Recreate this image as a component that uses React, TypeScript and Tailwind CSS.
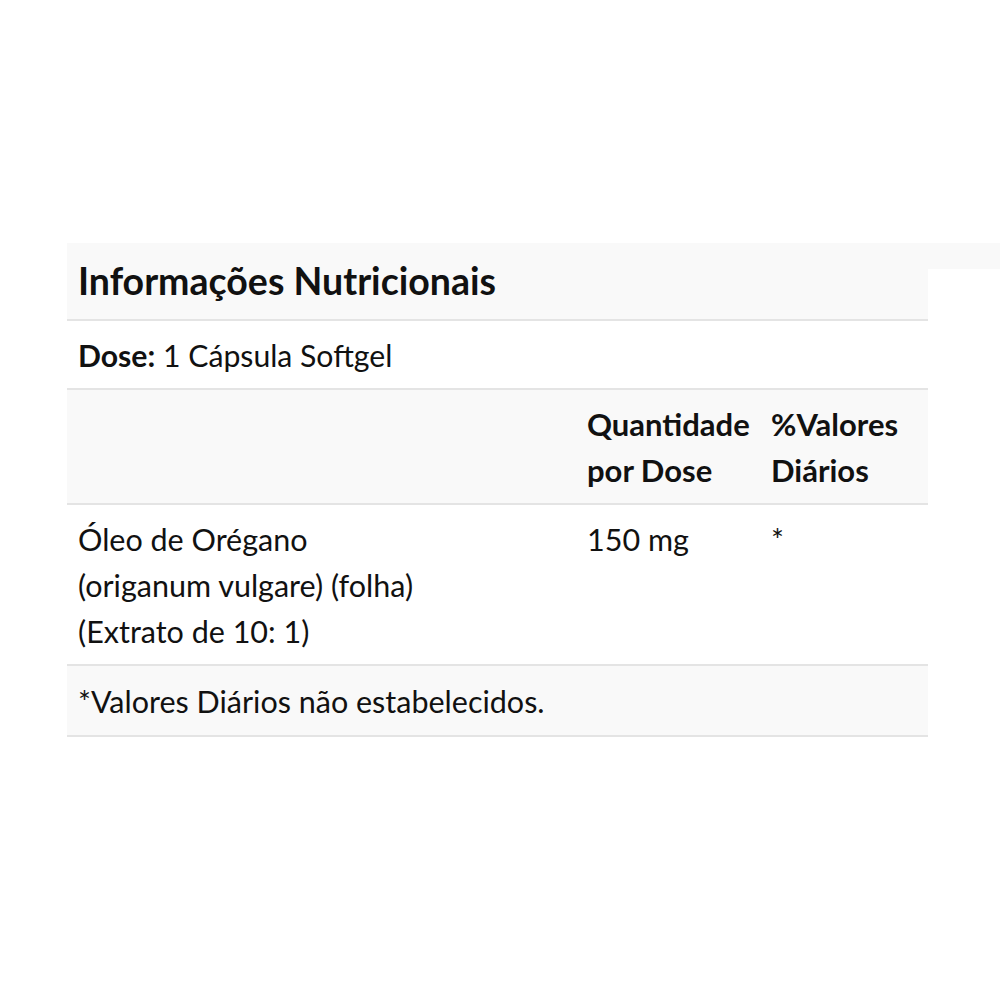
import React from "react";

export default function App() {
  const font = { fontFamily: "Lato, 'Open Sans', sans-serif" };
  return (
    <div className="min-h-[1000px] w-[1000px] bg-white pt-[243px] pl-[67px] text-[#111]" style={font}>
      <div className="flex items-start">
        <div className="w-[861px] h-[78px] flex items-center bg-[#f9f9f9] border-b-2 border-[#e4e4e4] px-[11px] text-[37.5px] leading-none font-bold">
          Informações Nutricionais
        </div>
        <div className="flex-1 h-[26px] bg-[#f9f9f9]" />
      </div>
      <div className="w-[861px] text-[30.5px] leading-[46px]">
        <div className="border-b-2 border-[#e4e4e4] px-[11px] pt-[11px] pb-[10px] text-[30.2px]">
          <span className="font-bold">Dose:</span> 1 Cápsula Softgel
        </div>
        <div className="grid grid-cols-[509px_184px_168px] bg-[#f9f9f9] border-b-2 border-[#e4e4e4] pt-[11px] pb-[10px] font-bold text-[31px]">
          <div className="px-[11px]"></div>
          <div className="px-[11px]">Quantidade<br />por Dose</div>
          <div className="px-[11px]">%Valores<br />Diários</div>
        </div>
        <div className="grid grid-cols-[509px_184px_168px] border-b-2 border-[#e4e4e4] pt-[11px] pb-[10px]">
          <div className="px-[11px]">Óleo de Orégano<br />(origanum vulgare) (folha)<br />(Extrato de 10: 1)</div>
          <div className="px-[11px]">150 mg</div>
          <div className="px-[11px]">*</div>
        </div>
        <div className="bg-[#f9f9f9] border-b-2 border-[#e4e4e4] px-[11px] pt-[12px] pb-[11px]">
          *Valores Diários não estabelecidos.
        </div>
      </div>
    </div>
  );
}
